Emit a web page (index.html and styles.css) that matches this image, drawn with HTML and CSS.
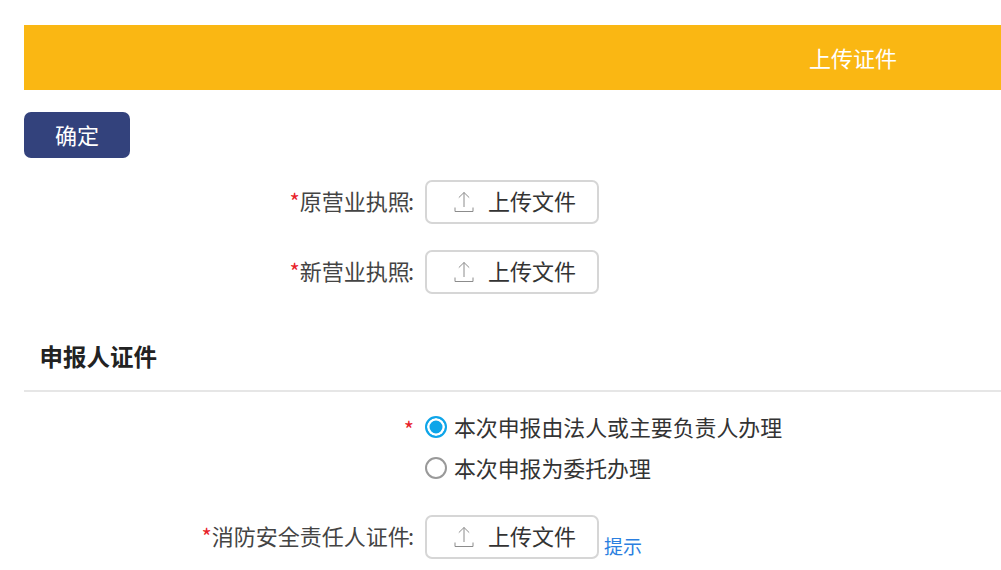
FILE: index.html
```html
<!DOCTYPE html>
<html lang="zh">
<head>
<meta charset="utf-8">
<title>上传证件</title>
<link rel="stylesheet" href="styles.css">
</head>
<body>
<svg class="sprite" width="0" height="0" aria-hidden="true"><symbol id="up" viewBox="0 0 20 22"><path d="M10 1.5V16M4.8 6.6 10 1.5l5.200 5.100M1 16.500V20.500H19V16.500" fill="none" stroke="#8c8c8c" stroke-width="1"/></symbol></svg>
<main class="page">
  <header class="banner"><h1 class="banner-title">上传证件</h1></header>
  <button class="confirm" type="button">确定</button>
  <div class="row row-first">
    <label class="label"><span class="req">*</span>原营业执照<span class="colon">:</span></label>
    <button class="upload" type="button"><svg class="up-icon"><use href="#up"/></svg>上传文件</button>
  </div>
  <div class="row row-second">
    <label class="label"><span class="req">*</span>新营业执照<span class="colon">:</span></label>
    <button class="upload" type="button"><svg class="up-icon"><use href="#up"/></svg>上传文件</button>
  </div>
  <h2 class="section">申报人证件</h2>
  <div class="radio-row">
    <div class="label"><span class="req">*</span></div>
    <div class="radios">
      <div class="radio-item"><span class="radio radio-on"></span>本次申报由法人或主要负责人办理</div>
      <div class="radio-item"><span class="radio"></span>本次申报为委托办理</div>
    </div>
  </div>
  <div class="row row-third">
    <label class="label"><span class="req">*</span>消防安全责任人证件<span class="colon">:</span></label>
    <button class="upload" type="button"><svg class="up-icon"><use href="#up"/></svg>上传文件</button>
    <a class="hint" href="#">提示</a>
  </div>
</main>
</body>
</html>
```
FILE: styles.css
```css
* { box-sizing: border-box; }
html, body { margin: 0; height: 100%; overflow: hidden; background: #fff; }
body { font-family: "Noto Sans CJK SC", "Liberation Sans", sans-serif; color: #333; }
.sprite { display: block; }
.page { padding: 25px 0 0 24px; width: 1001px; }
.banner { height: 65px; background: #fab713; display: flex; align-items: center; padding: 0 0 2px 785px; }
.banner-title { margin: 0; font-size: 22px; font-weight: 400; color: #fff; line-height: 1; white-space: nowrap; }
.confirm { display: block; margin-top: 22px; width: 106px; height: 46px; background: #33427c; color: #fff; border: 0; border-radius: 7px; font: inherit; font-size: 22px; line-height: 1; padding: 0 0 2px; }
.row { display: flex; align-items: center; }
.row-first { margin-top: 22px; }
.row-second { margin-top: 26px; }
.row-third { margin-top: 31px; }
.label { width: 401px; flex: none; text-align: right; font-size: 22px; line-height: 1; padding: 0 11px 4px 0; white-space: nowrap; color: #444; }
.colon { margin-left: -2px; }
.req { color: #e8232a; }
.upload { display: flex; align-items: center; width: 174px; height: 44px; padding: 0 0 4px 27px; background: #fff; border: 2px solid #d6d6d6; border-radius: 7px; font: inherit; font-size: 22px; line-height: 1; color: #333; }
.up-icon { width: 20px; height: 22px; margin: 4px 14px 0 0; flex: none; }
.hint { align-self: flex-end; margin-left: 5px; font-size: 19px; line-height: 1; color: #2b7fe0; text-decoration: none; padding-bottom: 4px; }
.section { margin: 47px 0 0; padding: 0 0 0 15.500px; border-bottom: 2px solid #e6e6e6; font-size: 23.500px; line-height: 30px; font-weight: 700; color: #222; height: 51px; }
.radio-row { display: flex; margin-top: 19px; }
.radio-row .label { padding-top: 6px; }
.radios { display: flex; flex-direction: column; gap: 9px; }
.radio-item { display: flex; align-items: center; font-size: 21.880px; line-height: 32px; color: #333; white-space: nowrap; }
.radio { width: 22px; height: 22px; margin-right: 7px; border: 2px solid #999; border-radius: 50%; background: #fff; flex: none; }
.radio-on { border-color: #0ea5e9; background: #0ea5e9; box-shadow: inset 0 0 0 2.500px #fff; }
```
